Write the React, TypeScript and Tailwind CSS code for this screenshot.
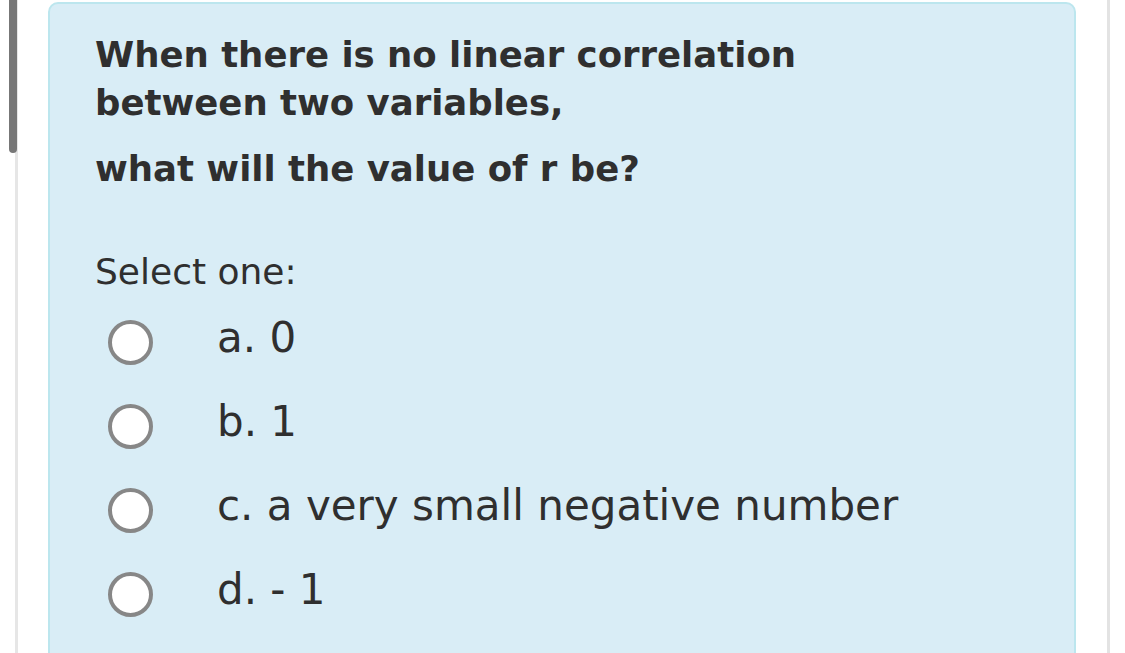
import React from 'react';

const options = ['a. 0', 'b. 1', 'c. a very small negative number', 'd. - 1'];

const Radio: React.FC = () => (
  <span className="block w-[45px] h-[45px] shrink-0 rounded-full border-[4px] border-[#878787] bg-white" />
);

const App: React.FC = () => {
  return (
    <div
      className="w-[1125px] h-[653px] overflow-hidden bg-white flex text-[#2f2f2f]"
      style={{ fontFamily: '"DejaVu Sans", Verdana, sans-serif' }}
    >
      <div className="w-[15px] shrink-0" />
      {/* page edge with the scrollbar over it */}
      <div className="relative w-[3px] shrink-0 bg-[#e6e6e6]">
        <div className="absolute left-[-6px] top-0 w-[8px] h-[153px] rounded-b-full bg-[#777777]" />
      </div>
      <div className="w-[30px] shrink-0" />

      <div className="w-[1028px] shrink-0 mt-[2px] h-[700px] rounded-[10px] border-2 border-[#bce6ee] bg-[#d9edf6] pl-[45px] pt-[27px]">
        <p className="text-[35.5px] leading-[48px] font-bold">
          When there is no linear correlation
          <br />
          between two variables,
        </p>
        <p className="mt-[18px] text-[35.5px] leading-[48px] font-bold">what will the value of r be?</p>

        <div className="mt-[55px] text-[36px] leading-[48px]">Select one:</div>

        <div className="mt-[4px] flex flex-col">
          {options.map(o => (
            <label key={o} className="h-[84px] flex items-center">
              <span className="ml-[13px]">
                <Radio />
              </span>
              <span className="ml-[64px] pb-[8px] text-[42px] leading-[50px] whitespace-nowrap">{o}</span>
            </label>
          ))}
        </div>
      </div>

      <div className="w-[31px] shrink-0" />
      <div className="w-[3px] shrink-0 bg-[#e3e3e3]" />
    </div>
  );
};

export default App;
